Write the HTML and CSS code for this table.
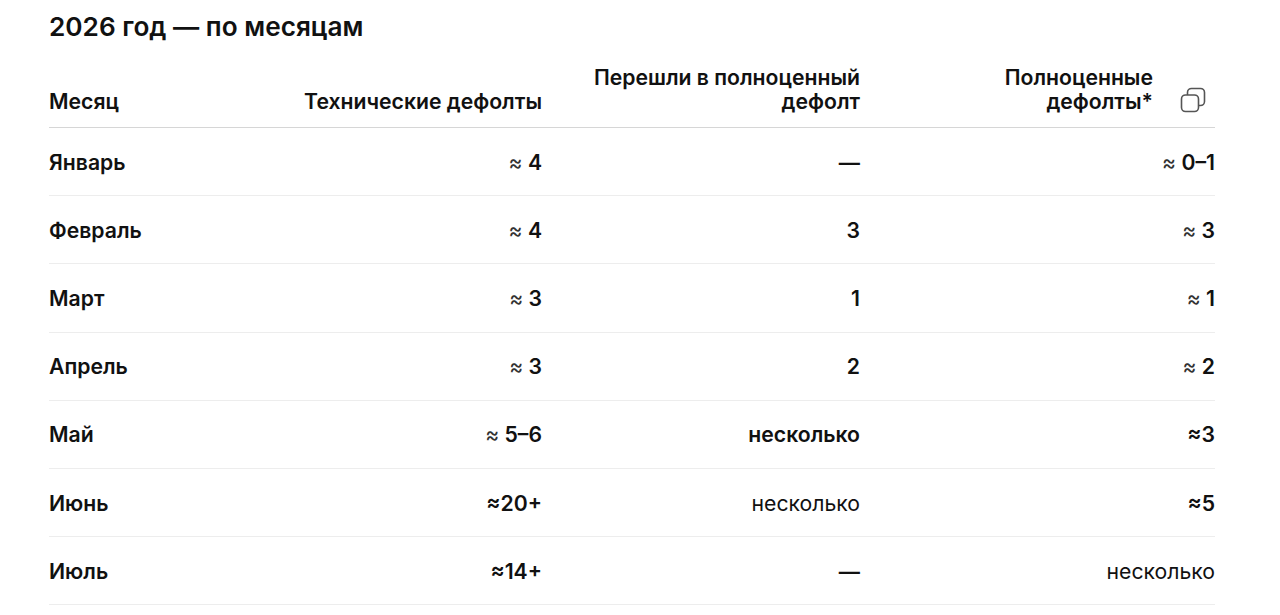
FILE: index.html
```html
<!DOCTYPE html>
<html lang="ru">
<head>
<meta charset="utf-8">
<link rel="stylesheet" href="styles.css">
</head>
<body>
<main class="page">
  <h2 class="title">2026 год — по месяцам</h2>
  <table class="grid">
    <colgroup>
      <col class="c1"><col class="c2"><col class="c3"><col class="c4">
    </colgroup>
    <thead>
      <tr>
        <th class="left">Месяц</th>
        <th class="right">Технические дефолты</th>
        <th class="right">Перешли в полноценный<br>дефолт</th>
        <th class="right">
          <div class="last-head">
            <span>Полноценные<br>дефолты*</span>
            <svg class="copy" width="26" height="26" viewBox="0 0 26 26" fill="none" stroke="#555" stroke-width="1.6">
              <path d="M7.5 8 V5.5 a4 4 0 0 1 4-4 h9 a4 4 0 0 1 4 4 v9 a4 4 0 0 1-4 4 h-2"/>
              <rect x="1.5" y="8" width="17" height="16.5" rx="4"/>
            </svg>
          </div>
        </th>
      </tr>
    </thead>
    <tbody>
      <tr><td class="left">Январь</td><td class="right"><span class="ap">≈</span> 4</td><td class="right">—</td><td class="right"><span class="ap">≈</span> 0–1</td></tr>
      <tr><td class="left">Февраль</td><td class="right"><span class="ap">≈</span> 4</td><td class="right">3</td><td class="right"><span class="ap">≈</span> 3</td></tr>
      <tr><td class="left">Март</td><td class="right"><span class="ap">≈</span> 3</td><td class="right">1</td><td class="right"><span class="ap">≈</span> 1</td></tr>
      <tr><td class="left">Апрель</td><td class="right"><span class="ap">≈</span> 3</td><td class="right">2</td><td class="right"><span class="ap">≈</span> 2</td></tr>
      <tr><td class="left">Май</td><td class="right"><span class="ap">≈</span> 5–6</td><td class="right">несколько</td><td class="right">≈3</td></tr>
      <tr><td class="left">Июнь</td><td class="right">≈20+</td><td class="right regular">несколько</td><td class="right">≈5</td></tr>
      <tr><td class="left">Июль</td><td class="right">≈14+</td><td class="right">—</td><td class="right regular">несколько</td></tr>
    </tbody>
  </table>
</main>
</body>
</html>
```

FILE: styles.css
```css
html, body {
  margin: 0;
  padding: 0;
  background: #ffffff;
}
body {
  font-family: Inter, "Noto Sans", sans-serif;
  color: #111111;
}
.page {
  padding: 11px 65px 0 49px;
}
.title {
  margin: 0 0 22px 0;
  font-size: 26.2px;
  line-height: 32px;
  font-weight: 600;
  letter-spacing: 0;
}
.grid {
  width: 100%;
  border-collapse: collapse;
  table-layout: fixed;
  font-size: 21.2px;
  font-weight: 600;
  letter-spacing: 0;
}
.c1 { width: 251px; }
.c2 { width: 242px; }
.c3 { width: 318px; }
.c4 { width: 355px; }
.grid th {
  font-weight: 600;
  line-height: 24px;
  vertical-align: bottom;
  padding: 0 0 14px 0;
  border-bottom: 1px solid #d6d6d6;
}
.grid td {
  height: 67.2px;
  padding: 0;
  line-height: 24px;
  vertical-align: middle;
  border-bottom: 1px solid #ededed;
}
.left { text-align: left; }
.right { text-align: right; }
.regular { font-weight: 400; }
.ap {
  font-weight: 400;
  color: #333;
}
.last-head {
  display: flex;
  justify-content: flex-end;
  align-items: flex-end;
  gap: 27px;
}
.copy {
  display: block;
  margin-right: 9px;
  margin-bottom: 0;
}
```
